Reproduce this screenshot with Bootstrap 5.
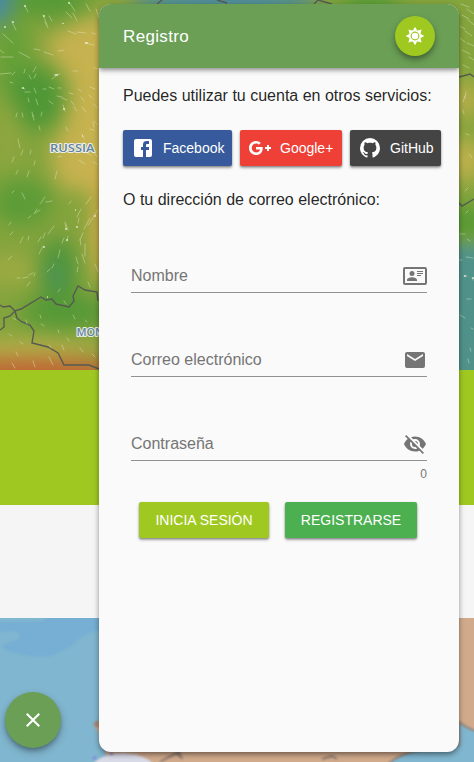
<!DOCTYPE html>
<html lang="es">
<head>
<meta charset="utf-8">
<meta name="viewport" content="width=device-width, initial-scale=1">
<title>Registro</title>
<link href="https://cdn.jsdelivr.net/npm/bootstrap@5.3.0/dist/css/bootstrap.min.css" rel="stylesheet">
<style>
body{font-family:"Liberation Sans",Arial,sans-serif;color:rgba(0,0,0,.87);background:#f5f5f5;height:762px;font-size:16px;line-height:24px}
.page-bg svg{display:block}
.band-lime{height:135px;background:#9fc921}
.band-grey{height:113px;background:#f5f5f5}
.panel{position:absolute;left:99px;top:4px;width:360px;height:748px;border-radius:12px;background:#fafafa;box-shadow:0 3px 5px -1px rgba(0,0,0,.3),0 2px 6px rgba(0,0,0,.25)}
.panel-head{height:64px;background:#6b9f56;color:#fff;box-shadow:0 2px 4px -1px rgba(0,0,0,.3),0 3px 5px rgba(0,0,0,.22)}
.panel-head h1{font-size:17px;font-weight:400;letter-spacing:.35px;padding-top:2px}
.round{border-radius:50%;color:#fff;border:0;padding:0;box-shadow:0 3px 5px -1px rgba(0,0,0,.3),0 4px 8px rgba(0,0,0,.22)}
.round-sun{width:40px;height:40px;background:#9fc921}
.round-close{position:absolute;left:5px;top:692px;width:56px;height:56px;background:#6b9f56}
.lift{height:36px;border:0;border-radius:2px;color:#fff!important;font-size:14px;line-height:20px;flex:none;box-shadow:0 2px 3px rgba(0,0,0,.3),0 1px 2px rgba(0,0,0,.25)}
.fb{width:109px;background:#365a9b!important}
.gp{width:102px;background:#ee4037!important}
.gh{width:91px;background:#444!important}
.login{width:130px;background:#9fc921!important}
.signup{width:132px;background:#4caf50!important}
.intro{padding-top:16px;height:62px}
.alt-intro{padding-top:22px;height:84px}
.line-field{height:43px;padding-top:10px;margin-bottom:41px;border-bottom:1px solid #919191;color:#757575}
.line-field input{border:0;background:none;box-shadow:none!important;padding:0;color:#757575;border-radius:0;height:24px}
.line-field input::placeholder{color:#757575;opacity:1}
.line-field.last{margin-bottom:0}
.hint{font-size:12px;line-height:14px;color:#757575;height:41px;padding-top:6px}
.ic{width:24px;height:24px;fill:currentColor;flex:none}
</style>
<script src="https://cdn.jsdelivr.net/npm/bootstrap@5.3.0/dist/js/bootstrap.bundle.min.js"></script>
</head>
<body class="position-relative overflow-hidden">
<div class="page-bg d-flex flex-column" aria-hidden="true">
<svg width="474" height="370" viewBox="0 0 474 370">
<defs><filter id="soft" x="-100%" y="-100%" width="300%" height="300%" color-interpolation-filters="sRGB"><feGaussianBlur stdDeviation="10"/></filter>
<filter id="softer" x="-50%" y="-50%" width="200%" height="200%" color-interpolation-filters="sRGB"><feGaussianBlur stdDeviation="8"/></filter></defs>
<rect width="474" height="370" fill="#84a43d"/>
<g filter="url(#soft)">
<path d="M125 12 78 20 42 45 58 64 72 85 66 122 50 150 58 187 88 192 125 180Z" fill="#c6b24f"/>
<ellipse cx="-8" cy="-5" rx="24" ry="30" fill="#4a8aa6"/>
<ellipse cx="50" cy="0" rx="40" ry="18" fill="#559a36"/>
<ellipse cx="12" cy="55" rx="18" ry="40" fill="#66a038"/>
<ellipse cx="36" cy="98" rx="28" ry="32" fill="#4f9736"/>
<ellipse cx="8" cy="135" rx="13" ry="35" fill="#90a740"/>
<ellipse cx="22" cy="202" rx="30" ry="24" fill="#5c9c37"/>
<ellipse cx="105" cy="225" rx="14" ry="60" fill="#d3ad4b"/>
<ellipse cx="10" cy="270" rx="30" ry="16" fill="#9caa42"/>
<ellipse cx="58" cy="272" rx="19" ry="34" fill="#4f953c"/>
<ellipse cx="65" cy="312" rx="45" ry="18" fill="#569937"/>
<ellipse cx="20" cy="348" rx="90" ry="7" fill="#c4b14d"/>
<ellipse cx="30" cy="378" rx="120" ry="20" fill="#c16635"/>
<ellipse cx="225" cy="0" rx="95" ry="14" fill="#4689a7"/>
<ellipse cx="370" cy="0" rx="30" ry="14" fill="#579c37"/>
<ellipse cx="466" cy="100" rx="16" ry="18" fill="#b9af4b"/>
<ellipse cx="466" cy="160" rx="18" ry="22" fill="#c0b14d"/>
<ellipse cx="466" cy="222" rx="30" ry="15" fill="#559a35"/>
</g>
<rect x="445" y="243" width="60" height="160" fill="#50928a" filter="url(#softer)"/>
<ellipse cx="56" cy="277" rx="9" ry="14" fill="#4e9370" opacity=".45" filter="url(#softer)"/>
<g fill="none" stroke="#555b50" stroke-width="1.400">
<path d="M0 305 3 307 10 306 15 311 21 309 41 297 46 300 52 299 56 304 69 307 74 301 73 296 78 286 85 290 97 292 98 301"/>
<path d="M0 330 4 327 4 318 10 316 15 311 17 318 22 322 30 325 34 331 32 343 48 347 58 353 64 365 89 365 99 369"/>
<path d="M157 4 162 0M217 0 227 3M314 4 318 0 332 4M459 77 470 74 474 77M459 203 462 206 474 199"/>
</g>
<g fill="none" stroke="#e9edc9" stroke-width=".9" stroke-linecap="round" opacity=".45">
<path d="M25 6l3 6M69 2l6 9M86 4l4 7M96 9l3 9M12 22l4 8M43 15l4 10M49 16l3 5M66 12l6 6M73 13l4 8M3 34l10 9M45 22l3 6M68 31l8 3M77 32l9 1M92 33l4 1M85 43l9 2M0 50l4 3M34 49l6 1M44 52l9 3M58 51l6-1M19 52l11 6M1 57l12 0M0 74l11-1M12 75l3-3M25 69l-1 4M36 67l-3 5M54 75l6-1M73 71l5 0M94 68l4 1"/>
<path d="M31 79l-2-4M34 78l2-4M52 79l4-3M10 82l3 1M22 88l3 1M25 92l5 0M34 88l2 5M43 89l3 0M49 87l5 2M58 88l3 0M28 98l1 4M36 99l2 6M49 101l4 3M63 105l2 6M71 101l3 4M81 97l3 4M89 95l3 3M94 104l3 4M57 96l5 1M62 98l5 2M69 93l4 1M78 89l3 2M90 87l5 2M32 112l1 5M42 112l-1 4M16 117l1-4M23 117l-1-4M33 115l1 5M74 107l3 4M82 107l4 5M94 121l3 3M66 127l2 4M39 126l1 4M82 134l2 4M90 129l4 1M93 122l1 5"/>
<path d="M18 139l2 9M30 154l1-4M21 155l2-5M12 162l2-5M34 165l1-4M58 157l4-1M71 150l3-4M79 160l6 4M87 153l4 2M93 162l4 2M18 170l-2 4M27 177l2-6M55 179l2-8M83 142l4 3M93 150l4 7"/>
<path d="M12 193l2-2M22 193l3 6M45 197l-5 7M52 201l-6 1M91 197l-5 7M37 209l-3 5M31 216l-3 2M35 213l5-3M81 209l-4 8M69 204l2-3M54 226l-6 8M45 233l-2 5M10 235l3-3M9 225l2-3M20 243l3-6M28 240l1-4M38 242l3-5M43 246l-4 8M65 222l1 6M62 243l2-5M67 241l1-5M68 230l-2-6M83 233l-3 7M90 218l-6 11M95 215l-7 10M98 210l-4 6M78 223l1-5M80 239l1 6M85 244l0 12M85 263l-3-9M60 250l-2 8M52 268l2-4M47 272l3-3M8 260l4-4M78 264l-2-7M98 272l-3-8M17 278l3 0M23 278l5-1M29 275l4-2M30 282l-3 4M34 276l1-3M77 272l1-5M58 292l2-3M88 282l2 5M64 301l2 3"/>
<path d="M13 318l3 2M26 320l1 4M41 324l3 2M73 315l2 4M58 330l1 3M9 334l3 2M20 342l3 2M49 345l2 3M80 348l3 4M92 354l3 3M16 352l2 4M33 361l2 6M49 357l4 8M62 345l2 5M12 363l3 5M40 315l1 3M85 320l2 2M67 338l2 3"/>
<path d="M461 4l8 3M467 9l7 5M462 15l7 4M468 20l6 5M460 26l5 3M465 31l7 5M460 38l5 4M467 43l7 3M462 50l8 4M469 57l5 3M463 65l6 3M465 96l-2 6M466 92l-1 6M463 110l1 4M466 134l3 1M469 154l3 4M468 188l-3 3M468 211l-2 2M460 234l5 0M467 239l3 2M459 260l3 0M466 257l7 1M464 276l3 0M472 278l1 2M467 299l4 0M460 315l5 3M471 328l2 1M470 348l1 3M468 359l1 4"/>
</g>
<g fill="#f2f3e0" opacity=".6"><path d="M24 5h2v2h-2zM68 2h2v2h-2zM43 15h2v2h-2zM12 21h2v2h-2zM4 26h2v2h-2zM62 23h2v1h-2zM85 42h3v2h-3zM55 74h3v2h-3zM63 108h2v2h-2zM22 87h2v2h-2zM82 135h1v2h-1zM65 228h2v2h-2zM43 246h2v2h-2zM75 209h1v2h-1zM94 215h2v2h-2zM66 239h2v2h-2zM47 296h1v2h-1zM76 226h2v2h-2zM464 275h2v2h-2zM472 277h2v2h-2z"/></g>
<g font-family="Open Sans, Lato, sans-serif" font-weight="600" font-size="10.800" fill="#6482a0" stroke="#edf0e7" stroke-width="2" stroke-linejoin="round" paint-order="stroke">
<text x="50" y="151.500" textLength="44.500" lengthAdjust="spacingAndGlyphs">RUSSIA</text><text x="76.500" y="336" textLength="60" lengthAdjust="spacingAndGlyphs">MONGOLIA</text>
</g>
</svg>
<div class="band-lime"></div>
<div class="band-grey"></div>
<svg width="474" height="144" viewBox="0 0 474 144">
<defs><filter id="edge" color-interpolation-filters="sRGB"><feGaussianBlur stdDeviation=".8"/></filter></defs>
<rect width="474" height="144" fill="#80b6cf"/>
<g filter="url(#edge)">
<path d="M-4 -4H104V12Q86 12 76 24 67 32 53 37 43 40 25 37 9 35 2 29 6 24 18 22 22 18 18 14 10 12 -4 15Z" fill="#76aed4"/>
<path d="M-4 -4H45V3Q22 5 -4 4Z" fill="#80b6cf"/>
<path d="M104 100 99 103 94 108 98 113 100 120 106 132V150H384Q400 138 414 132L440 80 459 105 480 115V-6H230Q150 20 104 100Z" fill="#d1aa8c"/>
<path d="M99 102Q92 104 94 108L99 110" fill="#a58878"/>
<path d="M459 104Q465 109 480 115V150H384Q393 139 414 133L459 127Z" fill="#80b6cf" stroke="#938479" stroke-width="2"/>
<path d="M90 150Q98 136 123 135 147 136 157 150Z" fill="#d9dae8"/>
<path d="M160 144 176 135 181 139 179 134 167 140M322 141 332 138 337 141" fill="none" stroke="#8b796d" stroke-width="2"/>
<path d="M93 141l3-2M110 136h3" stroke="#7b7cda" stroke-width="2"/>
</g>
</svg>
</div>

<main class="panel d-flex flex-column overflow-hidden">
<header class="panel-head d-flex align-items-center justify-content-between px-4 flex-shrink-0">
<h1 class="m-0">Registro</h1>
<button class="round round-sun d-flex align-items-center justify-content-center" aria-label="Tema">
<svg class="ic" viewBox="0 0 24 24"><circle cx="12" cy="12" r="5.200" fill="none" stroke="currentColor" stroke-width="1.600"/><circle cx="12" cy="12" r="3.200"/><g id="rays"><path d="M12 2.700 14.300 6.700H9.700ZM12 21.300 9.700 17.300H14.300ZM2.700 12 6.700 9.700V14.300ZM21.300 12 17.300 14.300V9.700Z"/></g><use href="#rays" transform="rotate(45 12 12)"/></svg>
</button>
</header>
<form class="px-4">
<div class="intro text-nowrap">Puedes utilizar tu cuenta en otros servicios:</div>
<div class="d-flex gap-2">
<button type="button" class="btn lift fb d-flex align-items-center gap-2 px-2 py-0"><svg class="ic" viewBox="0 0 24 24"><path d="M5,3H19A2,2 0 0,1 21,5V19A2,2 0 0,1 19,21H5A2,2 0 0,1 3,19V5A2,2 0 0,1 5,3M18,5H15.500A3.500,3.500 0 0,0 12,8.500V11H10V14H12V21H15V14H18V11H15V9A1,1 0 0,1 16,8H18V5Z"/></svg>Facebook</button>
<button type="button" class="btn lift gp d-flex align-items-center gap-2 px-2 py-0"><svg class="ic" viewBox="0 0 24 24"><path d="M23,11H21V9H19V11H17V13H19V15H21V13H23M8,11V13.400H12C11.800,14.400 10.800,16.400 8,16.400C5.600,16.400 3.700,14.400 3.700,12C3.700,9.600 5.600,7.600 8,7.600C9.400,7.600 10.300,8.200 10.800,8.700L12.700,6.900C11.500,5.700 9.900,5 8,5C4.100,5 1,8.100 1,12C1,15.900 4.100,19 8,19C12,19 14.700,16.200 14.700,12.200C14.700,11.700 14.700,11.400 14.600,11H8Z"/></svg>Google+</button>
<button type="button" class="btn lift gh d-flex align-items-center gap-2 px-2 py-0"><svg class="ic" viewBox="0 0 24 24"><path d="M12,2A10,10 0 0,0 2,12C2,16.420 4.870,20.170 8.840,21.500C9.340,21.580 9.500,21.270 9.500,21C9.500,20.770 9.500,20.140 9.500,19.310C6.730,19.910 6.140,17.970 6.140,17.970C5.680,16.810 5.030,16.500 5.030,16.500C4.120,15.880 5.100,15.900 5.100,15.900C6.100,15.970 6.630,16.930 6.630,16.930C7.500,18.450 8.970,18 9.540,17.760C9.630,17.110 9.890,16.670 10.170,16.420C7.950,16.170 5.620,15.310 5.620,11.500C5.620,10.390 6,9.500 6.650,8.790C6.550,8.540 6.200,7.500 6.750,6.150C6.750,6.150 7.590,5.880 9.500,7.170C10.290,6.950 11.150,6.840 12,6.840C12.850,6.840 13.710,6.950 14.500,7.170C16.410,5.880 17.250,6.150 17.250,6.150C17.800,7.500 17.450,8.540 17.350,8.790C18,9.500 18.380,10.390 18.380,11.500C18.380,15.320 16.040,16.160 13.810,16.410C14.170,16.720 14.500,17.330 14.500,18.260C14.500,19.600 14.500,20.680 14.500,21C14.500,21.270 14.660,21.590 15.170,21.500C19.140,20.160 22,16.420 22,12A10,10 0 0,0 12,2Z"/></svg>GitHub</button>
</div>
<div class="alt-intro">O tu dirección de correo electrónico:</div>
<div class="px-2">
<div class="line-field d-flex align-items-center"><input class="form-control" placeholder="Nombre" aria-label="Nombre"><svg class="ic" viewBox="0 0 24 24"><path d="M22,3H2C.910,3.040 .040,3.910 0,5V19C.040,20.090 .910,20.960 2,21H22C23.090,20.960 23.960,20.090 24,19V5C23.960,3.910 23.090,3.040 22,3M22,19H2V5H22V19M14,17V15.750C14,14.090 10.660,13.250 9,13.250C7.340,13.250 4,14.090 4,15.750V17H14M9,7A2.500,2.500 0 1,0 11.500,9.500A2.500,2.500 0 0,0 9,7M14,7V8H20V7H14M14,9V10H20V9H14M14,11V12H18V11H14"/></svg></div>
<div class="line-field d-flex align-items-center"><input class="form-control" placeholder="Correo electrónico" aria-label="Correo electrónico"><svg class="ic" viewBox="0 0 24 24"><path d="M20,8L12,13L4,8V6L12,11L20,6M20,4H4C2.890,4 2,4.890 2,6V18A2,2 0 0,0 4,20H20A2,2 0 0,0 22,18V6C22,4.890 21.100,4 20,4Z"/></svg></div>
<div class="line-field last d-flex align-items-center"><input type="password" class="form-control" placeholder="Contraseña" aria-label="Contraseña"><svg class="ic" viewBox="0 0 24 24"><path d="M11.830,9L15,12.160C15,12.110 15,12.050 15,12A3,3 0 0,0 12,9C11.940,9 11.890,9 11.830,9M7.530,9.800L9.080,11.350C9.030,11.560 9,11.770 9,12A3,3 0 0,0 12,15C12.220,15 12.440,14.970 12.650,14.920L14.200,16.470C13.530,16.800 12.790,17 12,17A5,5 0 0,1 7,12C7,11.210 7.200,10.470 7.530,9.800M2,4.270L4.280,6.550L4.730,7C3.080,8.300 1.780,10 1,12C2.730,16.390 7,19.500 12,19.500C13.550,19.500 15.030,19.200 16.380,18.660L16.810,19.080L19.730,22L21,20.730L3.270,3M12,7A5,5 0 0,1 17,12C17,12.640 16.870,13.260 16.640,13.820L19.570,16.750C21.070,15.500 22.270,13.860 23,12C21.270,7.610 17,4.500 12,4.500C10.600,4.500 9.260,4.750 8,5.200L10.170,7.350C10.740,7.130 11.350,7 12,7Z"/></svg></div>
<div class="hint text-end">0</div>
<div class="d-flex gap-3 px-2">
<button type="button" class="btn lift login p-0">INICIA SESIÓN</button>
<button type="button" class="btn lift signup p-0">REGISTRARSE</button>
</div>
</div>
</form>
</main>
<button class="round round-close d-flex align-items-center justify-content-center" aria-label="Cerrar"><svg class="ic" viewBox="0 0 24 24"><path d="M19,6.410L17.590,5L12,10.590L6.410,5L5,6.410L10.590,12L5,17.590L6.410,19L12,13.410L17.590,19L19,17.590L13.410,12L19,6.410Z"/></svg></button>
</body>
</html>
